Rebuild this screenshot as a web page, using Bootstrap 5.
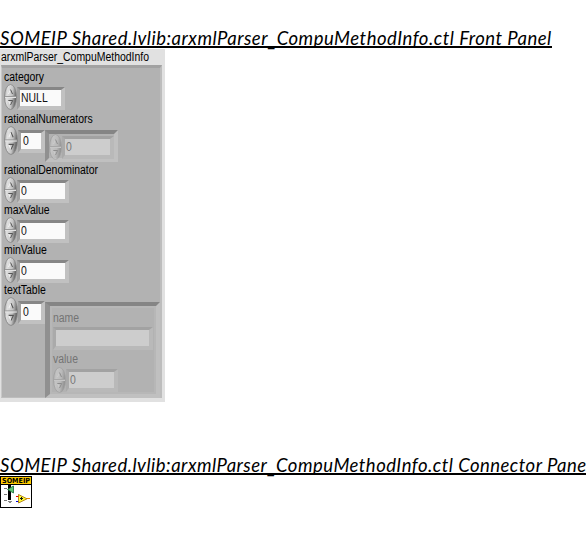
<!DOCTYPE html>
<html lang="en">
<head>
<meta charset="utf-8">
<meta name="viewport" content="width=device-width, initial-scale=1">
<title>CompuMethodInfo.ctl</title>
<link rel="stylesheet" href="https://cdn.jsdelivr.net/npm/bootstrap@5.3.0/dist/css/bootstrap.min.css">
<style>
body{background:#fff;color:#000;font-family:"Liberation Sans",Arial,sans-serif;height:533px;overflow:hidden}
.doc-title{font:italic 400 18.5px/22px Lato,"Open Sans",sans-serif;height:22px;padding-top:1px;border-bottom:2px solid #000;white-space:pre;width:max-content;letter-spacing:.5px}
.doc-title span{display:inline-block;line-height:1;transform:translateY(1px)}
.front-title{margin-top:26px}
.pane-title{margin-top:51px;letter-spacing:.48px}
.panel{width:165px;height:353px;margin-top:1px;background:#e1e1e1}
.panel-name{height:16px;line-height:16px;padding-left:1px;white-space:nowrap}
.panel-body{width:161px;height:333px;margin-left:1px;background:#b2b2b2;border-style:solid;border-width:3px 2px 1px 1px;border-color:#a2a2a2 #bdbdbd #bdbdbd #c8c8c8;padding:2px 0 0 2px}
.panel span{display:inline-block;font-size:12px;transform:translateY(-1px) scaleX(.87);transform-origin:0 50%}
.lbl{line-height:14px;height:14px;white-space:nowrap}
.h42{height:42px}.h51{height:51px}.h40{height:40px}
.knob{flex:none;width:13px;height:26px;display:block}
.knob.big{width:14px;height:29px}
.well{flex:none;margin-top:2px;border-style:solid;border-width:3px 4px 4px 3px;border-color:#868686 #c1c1c1 #c1c1c1 #a0a0a0;background:#fafafa;line-height:16px;height:23px;padding-left:1px;color:#111;white-space:nowrap}
.well.low{margin-top:3px}
.w-cat{width:48px}.w-num{width:52px}.w-idx{width:27px;margin-top:4px;padding-left:2px}
.array-frame{border-style:solid;border-width:4px;border-color:#858585 #c0c0c0 #c0c0c0 #909090}
.off .well{background:#cdcdcd;border-color:#a2a2a2 #b9b9b9 #b9b9b9 #aaa;color:#777}
.off .lbl{color:#747474}
.off .knob{opacity:.4;width:13px}
.num-frame{width:73px;height:32px;margin-top:4px}
.tbl-frame{width:116px;height:96px;margin-top:5px;border-width:4px 4px 4px 5px}
.tbl-cell{height:88px;border:2px solid #b7b7b7;padding:3px 0 0 1px}
.w-str{width:100px}
.lbl-low{height:17px;padding-top:2px}
.vi-icon{display:block;width:32px;height:32px;margin-top:1px}
</style>
</head>
<body>
<svg width="0" height="0" class="position-absolute">
<defs><linearGradient id="kg" x1="0" x2="1" y1="0" y2=".25"><stop offset="0" stop-color="#9b9b9b"/><stop offset=".3" stop-color="#e0e0e0"/><stop offset=".7" stop-color="#c4c4c4"/><stop offset="1" stop-color="#666"/></linearGradient></defs>
<symbol id="k" viewBox="0 0 13 26" preserveAspectRatio="none"><ellipse cx="6.5" cy="13" rx="6" ry="12.5" fill="url(#kg)" stroke="#858585" stroke-width=".8"/><path d="M1 12.5h11" stroke="#999"/><path d="M1 13.5h11" stroke="#e4e4e4"/><path d="M4.500 10l2-4.500M4.500 16.500l2 4.500" fill="none" stroke="#f4f4f4"/><path d="M6.500 5.500L8.500 10M4.300 16.500h4.400L6.500 21" fill="none" stroke="#555"/></symbol>
</svg>
<main class="d-flex flex-column align-items-start">
<h1 class="doc-title front-title mb-0">SOMEIP Shared.lvlib:arxmlParser<span>_</span>CompuMethodInfo.ctl Front Panel</h1>
<section class="panel">
<div class="panel-name"><span>arxmlParser_CompuMethodInfo</span></div>
<div class="panel-body">
<div class="h42"><div class="lbl"><span>category</span></div><div class="d-flex"><svg class="knob"><use href="#k"/></svg><div class="well low w-cat"><span>NULL</span></div></div></div>
<div class="h51"><div class="lbl"><span>rationalNumerators</span></div><div class="d-flex"><svg class="knob big"><use href="#k"/></svg><div class="well w-idx"><span>0</span></div><div class="array-frame num-frame off d-flex"><svg class="knob"><use href="#k"/></svg><div class="well w-num"><span>0</span></div></div></div></div>
<div class="h40"><div class="lbl"><span>rationalDenominator</span></div><div class="d-flex"><svg class="knob"><use href="#k"/></svg><div class="well low w-num"><span>0</span></div></div></div>
<div class="h40"><div class="lbl"><span>maxValue</span></div><div class="d-flex"><svg class="knob"><use href="#k"/></svg><div class="well low w-num"><span>0</span></div></div></div>
<div class="h40"><div class="lbl"><span>minValue</span></div><div class="d-flex"><svg class="knob"><use href="#k"/></svg><div class="well low w-num"><span>0</span></div></div></div>
<div><div class="lbl"><span>textTable</span></div><div class="d-flex"><svg class="knob big"><use href="#k"/></svg><div class="well w-idx"><span>0</span></div><div class="array-frame tbl-frame off"><div class="tbl-cell"><div class="lbl"><span>name</span></div><div class="well w-str"></div><div class="lbl lbl-low"><span>value</span></div><div class="d-flex"><svg class="knob"><use href="#k"/></svg><div class="well w-num"><span>0</span></div></div></div></div></div></div>
</div>
</section>
<h2 class="doc-title pane-title mb-0">SOMEIP Shared.lvlib:arxmlParser<span>_</span>CompuMethodInfo.ctl Connector Pane</h2>
<svg class="vi-icon" viewBox="0 0 32 32">
<g shape-rendering="crispEdges"><path d="M.5.5h31v31H.5z" fill="#fff" stroke="#000"/><path d="M1 1h30v7H1z" fill="#fc0"/><path d="M1 8h30v1H1z"/>
<path d="M8 9h3v15H8z"/><path d="M4 12h3v1H4zM4 18h3v1H4zM4 24h3v1H4z" fill="#777"/><path d="M8 25h4v1H8zM9 26h2v1H9z" fill="#888"/>
<path d="M16 20h3v1h-3z" fill="#e00"/><path d="M16 25h3v1h-3z" fill="#00d"/><path d="M27 22h3v1h-3z" fill="#e80"/></g>
<path d="M7.500 13.500L13.500 10v7z" fill="#5fc878" stroke="#186a36" stroke-width=".8"/>
<path d="M18.500 18.500L27 22.800l-8.500 4.200z" fill="#ff3" stroke="#a66b00" stroke-width=".8"/><path d="M20 22.500h3M21.500 21v3" stroke="#111"/>
<text x="2" y="7" font-family="DejaVu Sans" font-size="7" font-weight="bold" textLength="28" lengthAdjust="spacingAndGlyphs">SOMEIP</text>
</svg>
</main>
<script src="https://cdn.jsdelivr.net/npm/bootstrap@5.3.0/dist/js/bootstrap.bundle.min.js"></script>
</body>
</html>
